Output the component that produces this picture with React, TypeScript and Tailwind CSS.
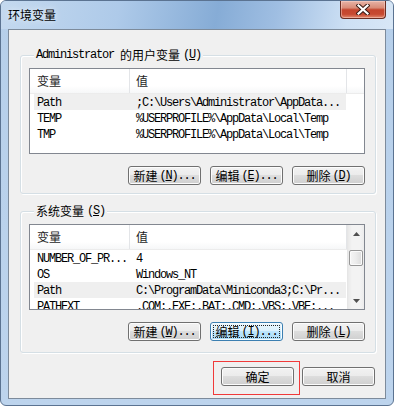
import React from "react";

const mono = "font-['Liberation_Mono',monospace] text-[12px] tracking-[-1.2px] leading-[14px] whitespace-pre";
const cjk = "font-['Noto_Sans_CJK_SC',sans-serif] text-[12px] leading-[14px] whitespace-pre";

function Btn({
  zh,
  key1,
  dots,
  focused,
}: {
  zh: string;
  key1?: string;
  dots?: boolean;
  focused?: boolean;
}) {
  return (
    <div
      className={`relative flex h-[19px] w-[73px] items-center justify-center rounded-[3px] border text-black ${
        focused
          ? "border-[#3c7fb1] bg-[linear-gradient(180deg,#eaf6fd_0%,#d9f0fc_50%,#bee6fd_50%,#a7d9f5_100%)] shadow-[inset_0_0_0_1px_#f4fbff]"
          : "border-[#707070] bg-[linear-gradient(180deg,#f2f2f2_0%,#ebebeb_50%,#dddddd_50%,#cfcfcf_100%)] shadow-[inset_0_0_0_1px_#fcfcfc]"
      }`}
    >
      <span className={cjk}>{zh}</span>
      {key1 && (
        <span className={`${mono} ml-[2px]`}>
          (<span className="underline">{key1}</span>){dots ? "..." : ""}
        </span>
      )}
      {focused && (
        <div className="pointer-events-none absolute inset-[2px] rounded-[1px] border border-dotted border-[#222]" />
      )}
    </div>
  );
}

function Row({ a, b, sel }: { a: string; b: string; sel?: boolean }) {
  return (
    <div
      className={`ml-[4px] flex h-[16px] w-[312px] shrink-0 items-center overflow-hidden pt-[1px] text-black ${
        sel ? "bg-[#efefef]" : ""
      }`}
    >
      <div className={`${mono} w-[102px] pl-[3px]`}>{a}</div>
      <div className={mono}>{b}</div>
    </div>
  );
}

function Header() {
  return (
    <div className="flex h-[25px] shrink-0 border-b border-[#ececec] bg-[linear-gradient(180deg,#ffffff_0%,#ffffff_70%,#f6f7f8_100%)] text-[#1e1e1e]">
      <div className={`${cjk} flex w-[100px] items-center border-r border-[#e3e5e8] pl-[7px]`}>变量</div>
      <div className={`${cjk} flex w-[217px] items-center border-r border-[#e3e5e8] pl-[6px]`}>值</div>
      <div className="flex-1" />
    </div>
  );
}

function Legend({ children }: { children: React.ReactNode }) {
  return (
    <div className="-mt-[8px] ml-[5px] flex h-[14px] w-fit items-center bg-[#f0f0f0] px-[2px] text-black">
      {children}
    </div>
  );
}

function Tri({ down }: { down?: boolean }) {
  return (
    <svg width="7" height="4" viewBox="0 0 7 4">
      <path d={down ? "M0 0 L7 0 L3.5 4 Z" : "M0 4 L3.5 0 L7 4 Z"} fill="#505050" />
    </svg>
  );
}

export default function App() {
  return (
    <div className="h-[406px] w-[394px] overflow-hidden bg-white">
      <div className="flex h-[406px] w-[394px] flex-col overflow-hidden rounded-[6px] border border-[#5b7391] bg-[linear-gradient(180deg,#b6cfea_0%,#bdd4ed_100%)]">
        {/* title bar */}
        <div className="flex h-[28px] shrink-0 items-start bg-[linear-gradient(100deg,#c4d9ef_0%,#aecae9_30%,#86acd6_55%,#9fbee2_70%,#cde0f4_88%,#d8e7f6_100%)]">
          <span className={`${cjk} ml-[7px] mt-[7px] text-black [text-shadow:0_0_6px_rgba(255,255,255,0.9)]`}>
            环境变量
          </span>
          <div className="ml-auto mr-[7px] flex h-[18px] w-[46px] items-center justify-center rounded-b-[4px] border border-t-0 border-[#6a2d22] bg-[linear-gradient(180deg,#e7b4a7_0%,#d98c78_40%,#c4452d_52%,#c74a31_78%,#e28a6f_100%)] shadow-[inset_0_0_0_1px_rgba(255,220,210,0.45)]">
            <svg width="14" height="11" viewBox="0 0 14 11">
              <path d="M2.5 1.5 L11.5 9.5 M11.5 1.5 L2.5 9.5" stroke="#3a1d17" strokeWidth="4.2" strokeLinecap="square" />
              <path d="M2.5 1.5 L11.5 9.5 M11.5 1.5 L2.5 9.5" stroke="#ffffff" strokeWidth="2.2" strokeLinecap="square" />
            </svg>
          </div>
        </div>

        {/* client */}
        <div className="mx-[7px] flex h-[370px] shrink-0 flex-col border border-[#7d8b9b] bg-[#f0f0f0]">
          {/* user variables */}
          <div className="ml-[11px] mr-[9px] mt-[25px] flex flex-col rounded-[3px] border border-[#d5dfe5] pb-[8px] pl-[8px] pr-[10px] shadow-[inset_1px_1px_0_#ffffff,1px_1px_0_#ffffff]">
            <Legend>
              <span className={mono}>Administrator </span>
              <span className={cjk}>的用户变量</span>
              <span className={`${mono} ml-[3px]`}>
                (<span className="underline">U</span>)
              </span>
            </Legend>
            <div className="mt-[6px] flex h-[86px] flex-col overflow-hidden border border-[#828790] bg-white">
              <Header />
              <Row a="Path" b=";C:\Users\Administrator\AppData..." sel />
              <Row a="TEMP" b="%USERPROFILE%\AppData\Local\Temp" />
              <Row a="TMP" b="%USERPROFILE%\AppData\Local\Temp" />
            </div>
            <div className="mt-[12px] flex justify-end gap-[9px]">
              <Btn zh="新建" key1="N" dots />
              <Btn zh="编辑" key1="E" dots />
              <Btn zh="删除" key1="D" />
            </div>
          </div>

          {/* system variables */}
          <div className="ml-[11px] mr-[9px] mt-[17px] flex flex-col rounded-[3px] border border-[#d5dfe5] pb-[11px] pl-[8px] pr-[10px] shadow-[inset_1px_1px_0_#ffffff,1px_1px_0_#ffffff]">
            <Legend>
              <span className={cjk}>系统变量</span>
              <span className={`${mono} ml-[3px]`}>
                (<span className="underline">S</span>)
              </span>
            </Legend>
            <div className="mt-[6px] flex h-[86px] overflow-hidden border border-[#828790] bg-white">
              <div className="flex flex-1 flex-col overflow-hidden">
                <Header />
                <Row a="NUMBER_OF_PR..." b="4" />
                <Row a="OS" b="Windows_NT" />
                <Row a="Path" b="C:\ProgramData\Miniconda3;C:\Pr..." sel />
                <Row a="PATHEXT" b=".COM;.EXE;.BAT;.CMD;.VBS;.VBE;..." />
              </div>
              <div className="flex w-[17px] shrink-0 flex-col border-l border-[#e6e6e6] bg-[linear-gradient(90deg,#e9e9e9_0%,#f3f3f3_25%,#f3f3f3_75%,#ececec_100%)]">
                <div className="flex h-[17px] items-center justify-center">
                  <Tri />
                </div>
                <div className="h-[8px]" />
                <div className="mx-[1px] h-[16px] rounded-[2px] border border-[#979797] bg-[linear-gradient(90deg,#f6f6f6_0%,#ececec_50%,#dcdcdc_100%)] shadow-[inset_0_0_0_1px_#fbfbfb]" />
                <div className="flex-1" />
                <div className="flex h-[17px] items-center justify-center">
                  <Tri down />
                </div>
              </div>
            </div>
            <div className="mt-[12px] flex justify-end gap-[9px]">
              <Btn zh="新建" key1="W" dots />
              <Btn zh="编辑" key1="I" dots focused />
              <Btn zh="删除" key1="L" />
            </div>
          </div>

          {/* ok / cancel */}
          <div className="mr-[10px] mt-[14px] flex justify-end gap-[8px]">
            <div className="relative">
              <Btn zh="确定" />
              <div className="pointer-events-none absolute left-[-8px] top-[-6px] h-[34px] w-[87px] border border-[#f03a3a]" />
            </div>
            <Btn zh="取消" />
          </div>
        </div>
      </div>
    </div>
  );
}
